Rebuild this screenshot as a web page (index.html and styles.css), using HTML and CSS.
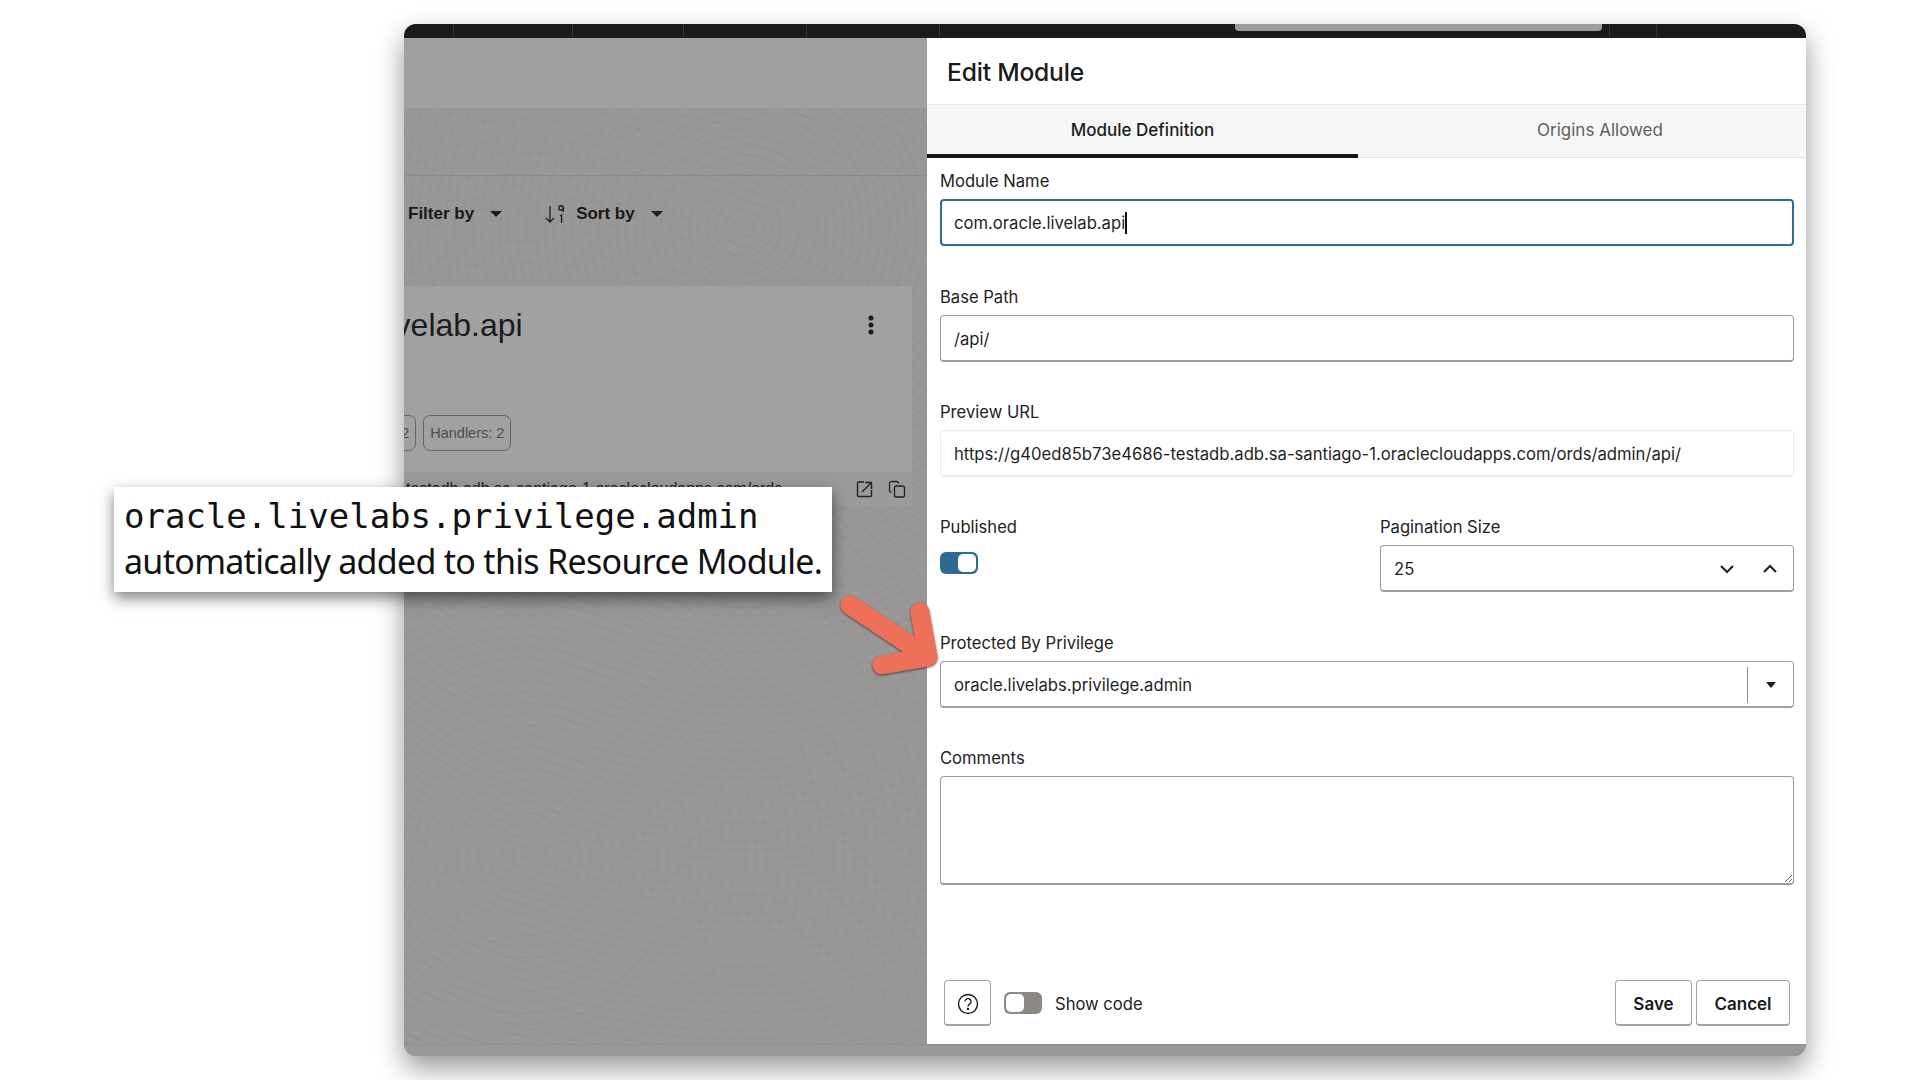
FILE: index.html
```html
<!DOCTYPE html>
<html lang="en">
  <head>
    <meta charset="UTF-8" />
    <meta name="viewport" content="width=device-width, initial-scale=1.0" />
    <title>Edit Module</title>
    <link rel="stylesheet" href="styles.css">
  </head>
  <body>
    <div class="window">
      <div class="top-bar">
        <span class="seg seg-1"></span>
        <span class="seg seg-2"></span>
        <span class="seg seg-3"></span>
        <span class="seg seg-4"></span>
        <span class="seg seg-5"></span>
        <span class="seg seg-6"></span>
        <span class="seg seg-7"></span>
        <div class="thumb"></div>
      </div>

      <div class="window-body">
        <div class="backdrop">
          <div class="backdrop-header"></div>
          <div class="backdrop-band"></div>
          <div class="toolbar">
            <span class="tool-label">Filter by</span>
            <span class="caret-down"></span>
            <svg class="sort-icon" width="22" height="22" viewBox="0 0 22 22" fill="none" stroke="#222" stroke-width="1.4">
              <path d="M6 3v16M2 15l4 4 4-4" />
              <circle cx="17" cy="5" r="2.2" />
              <path d="M19.2 5v4M16 13l1.6-1v8" />
            </svg>
            <span class="tool-label">Sort by</span>
            <span class="caret-down"></span>
          </div>

          <div class="card">
            <div class="card-head">
              <h2 class="card-title">com.oracle.livelab.api</h2>
              <svg class="kebab" width="6" height="20" viewBox="0 0 6 20" fill="#1d1d1d">
                <circle cx="3" cy="3" r="2.5" />
                <circle cx="3" cy="10" r="2.5" />
                <circle cx="3" cy="17" r="2.5" />
              </svg>
            </div>
            <div class="chips">
              <span class="chip chip-cut">Templates: 2</span>
              <span class="chip">Handlers: 2</span>
            </div>
            <div class="card-foot">
              <span class="card-url">testadb.adb.sa-santiago-1.oraclecloudapps.com/ords...</span>
              <svg class="foot-icon" width="18" height="18" viewBox="0 0 18 18" fill="none" stroke="#222" stroke-width="1.4">
                <path d="M8 2H2.5a1 1 0 0 0-1 1v12.500a1 1 0 0 0 1 1h12a1 1 0 0 0 1-1V10" />
                <path d="M6 12L15 3M9 2.500h6.500V9" />
              </svg>
              <svg class="foot-icon" width="18" height="18" viewBox="0 0 18 18" fill="none" stroke="#222" stroke-width="1.3">
                <rect x="6.500" y="6" width="10" height="11" rx="2" />
                <path d="M3.500 12.500A2 2 0 0 1 1.500 10.500V3.500a2 2 0 0 1 2-2h5a2 2 0 0 1 2 2" />
              </svg>
            </div>
          </div>
        </div>

        <div class="panel">
          <div class="panel-title">Edit Module</div>
          <div class="tabs">
            <div class="tab tab-active">Module Definition</div>
            <div class="tab tab-other">Origins Allowed</div>
          </div>

          <form class="form">
            <div class="field">
              <label>Module Name</label>
              <div class="input input-focus">com.oracle.livelab.api<span class="text-caret"></span></div>
            </div>
            <div class="field">
              <label>Base Path</label>
              <div class="input">/api/</div>
            </div>
            <div class="field">
              <label>Preview URL</label>
              <div class="input input-readonly">https://g40ed85b73e4686-testadb.adb.sa-santiago-1.oraclecloudapps.com/ords/admin/api/</div>
            </div>
            <div class="field-row">
              <div class="field">
                <label>Published</label>
                <div class="switch switch-on"><span class="knob"></span></div>
              </div>
              <div class="field">
                <label>Pagination Size</label>
                <div class="input input-number">
                  <span class="grow">25</span>
                  <svg class="chev" width="16" height="10" viewBox="0 0 16 10" fill="none" stroke="#1d1d1d" stroke-width="2"><path d="M2 2l6 6 6-6" /></svg>
                  <svg class="chev" width="16" height="10" viewBox="0 0 16 10" fill="none" stroke="#1d1d1d" stroke-width="2"><path d="M2 8l6-6 6 6" /></svg>
                </div>
              </div>
            </div>
            <div class="field">
              <label>Protected By Privilege</label>
              <div class="input input-select">
                <span class="grow">oracle.livelabs.privilege.admin</span>
                <span class="select-btn"><span class="caret-down"></span></span>
              </div>
            </div>
            <div class="field field-comments">
              <label>Comments</label>
              <textarea class="comments"></textarea>
            </div>
          </form>

          <div class="panel-foot">
            <button type="button" class="btn btn-help">
              <svg width="22" height="22" viewBox="0 0 22 22" fill="none" stroke="#1d1d1d" stroke-width="1.4">
                <circle cx="11" cy="11" r="9.500" />
                <path d="M8 8.600a3 3 0 1 1 4.600 2.500c-1 .7-1.600 1.200-1.600 2.400" />
                <circle cx="11" cy="16" r=".6" fill="#1d1d1d" />
              </svg>
            </button>
            <div class="switch switch-off"><span class="knob"></span></div>
            <span class="show-code">Show code</span>
            <span class="grow"></span>
            <button type="button" class="btn btn-save">Save</button>
            <button type="button" class="btn btn-cancel">Cancel</button>
          </div>
        </div>
      </div>
      <div class="window-bottom"></div>
    </div>

    <div class="callout">
      <div class="callout-code">oracle.livelabs.privilege.admin</div>
      <div class="callout-text">automatically added to this Resource Module.</div>
    </div>

    <svg class="arrow" width="120" height="100" viewBox="0 0 120 100" fill="none" stroke="#ef7059" stroke-width="19" stroke-linecap="round" stroke-linejoin="round">
      <path d="M20 20L98 72" />
      <path d="M90 27L98 72L52 80" />
    </svg>
  </body>
</html>
```

FILE: styles.css
```css
html, body {
  margin: 0;
  padding: 0;
  height: 100%;
  background-color: #fff;
  overflow: hidden;
}
body {
  font-family: Inter, "Liberation Sans", sans-serif;
  color: #1f1f1f;
  position: relative;
}

/* app window */
.window {
  width: 1402px;
  height: 1032px;
  margin: 24px 0 0 404px;
  border-radius: 12px;
  overflow: hidden;
  box-shadow: 0 12px 28px rgba(0, 0, 0, 0.42);
  display: flex;
  flex-direction: column;
  background-color: #999;
}
.top-bar {
  height: 14px;
  flex: none;
  display: flex;
  background-color: #1c1b1a;
  position: relative;
}
.seg {
  border-right: 1px solid #353433;
  flex: none;
}
.seg-1 { width: 49px; }
.seg-2 { width: 118px; }
.seg-3 { width: 110px; }
.seg-4 { width: 122px; }
.seg-5 { width: 132px; }
.seg-6 { width: 669px; }
.seg-7 { width: 46px; }
.thumb {
  position: absolute;
  left: 831px;
  top: 0;
  width: 367px;
  height: 7px;
  background-color: #9b9b9b;
  border-radius: 0 0 4px 4px;
}
.window-body {
  flex: 1;
  display: flex;
  min-height: 0;
}
.window-bottom {
  height: 12px;
  flex: none;
  background-color: #989898;
  border-top: 1px solid #8f8f8f;
  box-sizing: border-box;
}

/* dimmed page behind the drawer */
.backdrop {
  width: 523px;
  flex: none;
  background-color: #989694;
  background-image:
    repeating-radial-gradient(circle at 340px 190px, rgba(0, 0, 0, 0.014) 0 2px, rgba(255, 255, 255, 0.006) 2px 9px),
    repeating-radial-gradient(circle at 120px 820px, rgba(0, 0, 0, 0.012) 0 2px, rgba(255, 255, 255, 0.006) 2px 11px);
  overflow: hidden;
  display: flex;
  flex-direction: column;
  padding-right: 15px;
  box-sizing: border-box;
}
.backdrop-header {
  height: 70px;
  flex: none;
  margin-right: -15px;
  background-color: #a0a0a0;
  border-bottom: 1px solid #959595;
}
.backdrop-band {
  height: 66px;
  flex: none;
  margin-right: -15px;
  border-bottom: 1px solid #8c8b88;
}
.toolbar {
  height: 110px;
  flex: none;
  display: flex;
  align-items: flex-start;
  padding: 26px 0 0 4px;
  box-sizing: border-box;
}
.tool-label {
  font-family: "Liberation Sans", Arial, sans-serif;
  font-size: 17px;
  font-weight: 700;
  line-height: 24px;
  color: #1a1a1a;
}
.toolbar .caret-down {
  margin: 9px 49px 0 16px;
}
.toolbar .caret-down:last-child {
  margin-right: 0;
}
.sort-icon {
  margin: 1px 10px 0 -7px;
}
.caret-down {
  display: inline-block;
  width: 0;
  height: 0;
  border-left: 6px solid transparent;
  border-right: 6px solid transparent;
  border-top: 6px solid #1f1f1f;
}
.card {
  height: 221px;
  flex: none;
  background-color: #a1a1a1;
  display: flex;
  flex-direction: column;
  overflow: hidden;
}
.card-head {
  height: 129px;
  flex: none;
  display: flex;
  justify-content: space-between;
  align-items: flex-start;
  padding: 19px 38px 0 0;
  box-sizing: border-box;
}
.card-title {
  margin: 0 0 0 -189px;
  font-family: "Liberation Sans", Arial, sans-serif;
  font-size: 32px;
  font-weight: 400;
  line-height: 40px;
  white-space: nowrap;
  color: #1c1c1c;
}
.kebab {
  margin-top: 10px;
}
.chips {
  height: 57px;
  flex: none;
  display: flex;
  gap: 7px;
  align-items: flex-start;
  margin-left: -84px;
}
.chip {
  height: 36px;
  box-sizing: border-box;
  padding: 0 6px;
  line-height: 34px;
  font-family: "Liberation Sans", Arial, sans-serif;
  font-size: 14.500px;
  color: #4d4d4d;
  border: 1px solid #666;
  border-radius: 7px;
  white-space: nowrap;
}
.card-foot {
  flex: 1;
  display: flex;
  align-items: flex-start;
  gap: 14px;
  padding: 8px 6px 0 2px;
  background-color: #9b9b9b;
}
.card-url {
  width: 436px;
  flex: none;
  font-family: "Liberation Sans", Arial, sans-serif;
  font-size: 16px;
  line-height: 18px;
  color: #222;
  white-space: nowrap;
  overflow: hidden;
}
.foot-icon {
  flex: none;
}

/* drawer */
.panel {
  flex: 1;
  background-color: #fff;
  display: flex;
  flex-direction: column;
  min-width: 0;
}
.panel-title {
  height: 66px;
  flex: none;
  box-sizing: border-box;
  padding: 17px 0 0 20px;
  font-size: 24.600px;
  font-weight: 500;
  line-height: 34px;
  color: #1a1a1a;
  letter-spacing: -0.2px;
}
.tabs {
  height: 54px;
  flex: none;
  display: flex;
  background-color: #f6f6f6;
  border-top: 1px solid #e8e8e8;
  border-bottom: 1px solid #e2e2e2;
  box-sizing: border-box;
}
.tab {
  flex: 1;
  text-align: center;
  font-size: 17px;
  line-height: 50px;
  color: #5f5f5f;
}
.tab-active {
  flex: none;
  width: 431px;
  color: #1c1c1c;
  font-weight: 500;
  border-bottom: 4px solid #161616;
  margin-bottom: -1px;
}
.tab-other {
  padding-left: 36px;
}
.form {
  display: flex;
  flex-direction: column;
  gap: 39.500px;
  padding: 12px 12px 0 13px;
}
.field label {
  display: block;
  font-size: 16.600px;
  line-height: 22px;
  margin-bottom: 7px;
  color: #222;
}
.field-comments {
  margin-top: -1px;
}
.input {
  height: 47px;
  box-sizing: border-box;
  display: flex;
  align-items: center;
  padding: 2px 13px 0;
  border: 1px solid #9c9c9c;
  border-bottom-width: 2px;
  border-radius: 4px;
  font-size: 16.650px;
  color: #1f1f1f;
  white-space: nowrap;
}
.input-focus {
  border: 2px solid #2f6c91;
  padding: 1px 12px 0;
}
.input-readonly {
  border: 1px solid #ececec;
  border-bottom-width: 2px;
}
.text-caret {
  display: inline-block;
  width: 2px;
  height: 22px;
  background-color: #111;
}
.grow {
  flex: 1;
}
.field-row {
  display: grid;
  grid-template-columns: 1fr 414px;
  column-gap: 25px;
  margin: -1px 0 1px;
}
.chev {
  flex: none;
  margin-left: 27px;
}
.input-number {
  padding-right: 15px;
}
.input-select {
  padding-right: 0;
}
.select-btn {
  flex: none;
  width: 45px;
  height: 36px;
  display: flex;
  align-items: center;
  justify-content: center;
  border-left: 1px solid #8c8c8c;
}
.select-btn .caret-down {
  border-left-width: 5.500px;
  border-right-width: 5.500px;
}
.comments {
  display: block;
  width: 100%;
  height: 109px;
  box-sizing: border-box;
  border: 1px solid #9c9c9c;
  border-bottom-width: 2px;
  border-radius: 4px;
  resize: vertical;
  background-color: #fff;
  margin: 0;
}
.switch {
  width: 38px;
  height: 22px;
  box-sizing: border-box;
  border-radius: 6px;
  display: flex;
  padding: 2px;
}
.knob {
  width: 18px;
  background-color: #fff;
  border-radius: 5px;
}
.switch-on {
  background-color: #2f6b90;
  justify-content: flex-end;
  margin-top: 14px;
}
.switch-off {
  background-color: #8e8984;
  margin-left: 13px;
}
.panel-foot {
  margin-top: auto;
  display: flex;
  align-items: center;
  padding: 0 16px 18px 17px;
}
.show-code {
  margin-left: 13px;
  padding-top: 1px;
  font-size: 16.600px;
  color: #222;
}
.btn {
  height: 46px;
  box-sizing: border-box;
  background-color: #fff;
  border: 1px solid #a3a3a3;
  border-bottom-width: 2px;
  border-radius: 4px;
  font-family: Inter, "Liberation Sans", sans-serif;
  font-size: 17px;
  font-weight: 600;
  color: #1a1a1a;
  padding: 2px 0 0;
}
.btn-help {
  width: 47px;
  display: flex;
  align-items: center;
  justify-content: center;
}
.btn-save {
  width: 77px;
}
.btn-cancel {
  width: 94px;
  margin-left: 4px;
}

/* annotations over the screenshot */
.callout {
  position: absolute;
  left: 114px;
  top: 487px;
  width: 718px;
  height: 105px;
  box-sizing: border-box;
  padding: 7px 0 0 10px;
  background-color: #fff;
  box-shadow: 0 6px 14px rgba(0, 0, 0, 0.5);
  color: #111;
}
.callout-code {
  font-family: "DejaVu Sans Mono", monospace;
  font-size: 34px;
  line-height: 45px;
  white-space: nowrap;
}
.callout-text {
  font-family: "Noto Sans", sans-serif;
  font-size: 34px;
  line-height: 44px;
  letter-spacing: -0.7px;
  white-space: nowrap;
}
.arrow {
  position: absolute;
  left: 830px;
  top: 585px;
  filter: drop-shadow(0 1px 1px rgba(0, 0, 0, 0.55));
}
```
